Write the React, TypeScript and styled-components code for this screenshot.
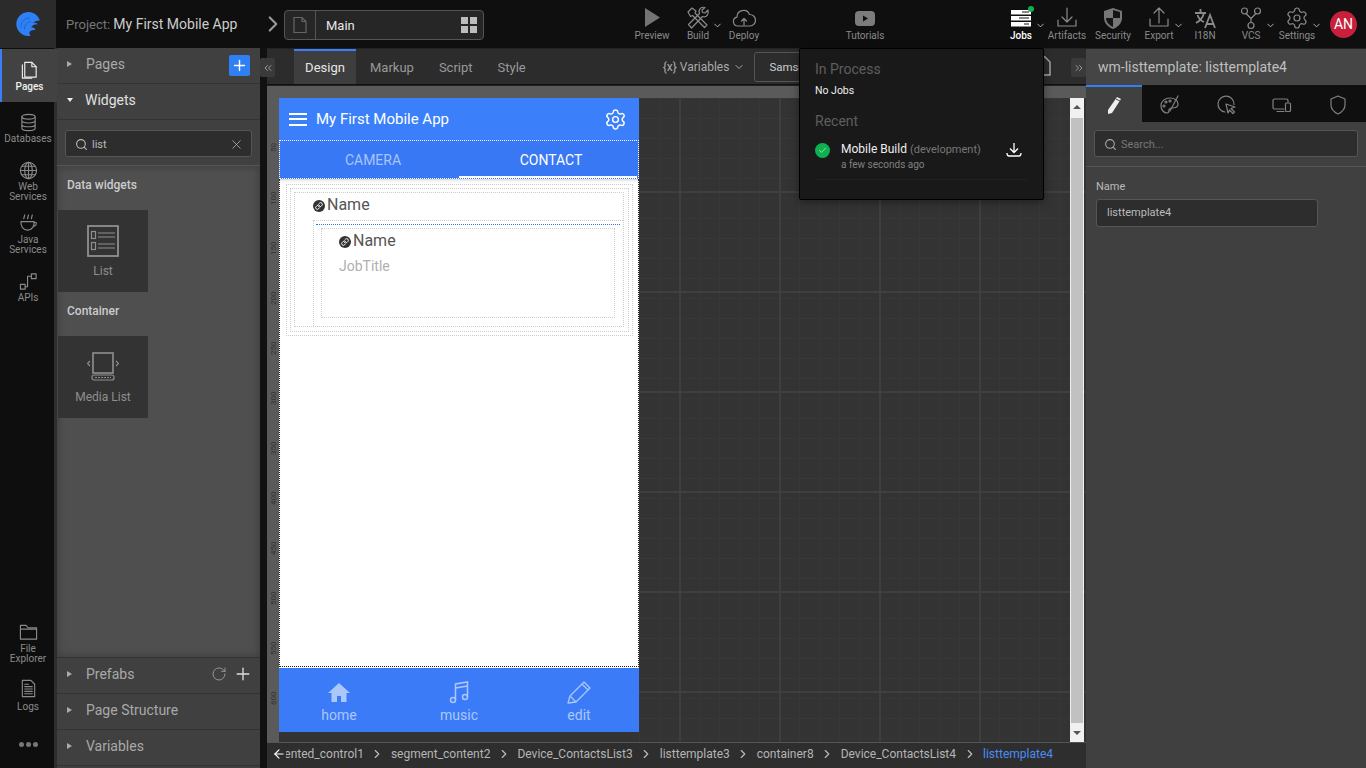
import React from "react";
import styled, { createGlobalStyle } from "styled-components";
import { Settings, Search, X, RotateCw, Plus, ChevronRight, ChevronDown, ChevronsLeft, ChevronsRight, Check, Link as LinkGlyph, ArrowLeft } from "lucide-react";

const Global = createGlobalStyle`
  html, body { margin: 0; padding: 0; height: 100%; background: #0f0f0f; overflow: hidden; }
  * { box-sizing: border-box; }
  body { font-family: Roboto, "Liberation Sans", sans-serif; }
`;

const Page = styled.div`
  position: relative;
  width: 1366px;
  height: 768px;
  display: flex;
  flex-direction: column;
  overflow: hidden;
  color: #bbb;
`;

/* top bar */
const TopBar = styled.header`
  height: 48px;
  flex: none;
  display: flex;
  align-items: stretch;
  background: #0f0f0f;
`;
const LogoCell = styled.div`
  width: 56px;
  background: #2b2b2b;
  display: flex;
  align-items: center;
  justify-content: center;
`;
const ProjectLabel = styled.div`
  margin-left: 10px;
  width: 198px;
  font-size: 13px;
  line-height: 48px;
  color: #777;
  white-space: nowrap;
  span { color: #ccc; font-size: 14px; }
`;
const CrumbArrow = styled(ChevronRight)`
  width: 26px;
  height: 26px;
  margin: 11px -2px 0 -4px;
  color: #999;
  flex: none;
`;
const PageCrumb = styled.div`
  margin-top: 10px;
  height: 30px;
  width: 200px;
  display: flex;
  align-items: center;
  border: 1px solid #555;
  border-radius: 4px;
  background: #262626;
`;
const PageIconCell = styled.div`
  width: 31px;
  height: 100%;
  display: flex;
  align-items: center;
  justify-content: center;
  border-right: 1px solid #555;
`;
const PageName = styled.div`
  flex: 1;
  padding-left: 10px;
  font-size: 13px;
  color: #e8e8e8;
`;
const Quad = styled.div`
  display: grid;
  grid-template-columns: 7px 7px;
  grid-template-rows: 7px 7px;
  gap: 2px;
  margin-right: 6px;
  i { background: #bdbdbd; }
`;
const ToolGroup = styled.div<{ $left: number }>`
  display: flex;
  margin-left: ${(p) => p.$left}px;
`;
const ToolItem = styled.div<{ $active?: boolean }>`
  position: relative;
  width: 46px;
  display: flex;
  flex-direction: column;
  align-items: center;
  padding-top: 6px;
  font-size: 10px;
  line-height: 12px;
  color: ${(p) => (p.$active ? "#fff" : "#8a8a8a")};
  font-weight: ${(p) => (p.$active ? 500 : 400)};
  svg.main { width: 24px; height: 24px; }
`;
const Caret = styled(ChevronDown)`
  position: absolute;
  right: -2px;
  top: 20px;
  width: 11px;
  height: 11px;
  color: #bbb;
  stroke-width: 2;
`;
const GreenDot = styled.span`
  position: absolute;
  top: 6px;
  left: 30px;
  width: 6px;
  height: 6px;
  border-radius: 50%;
  background: #10b050;
`;
const Avatar = styled.div`
  margin: 11px 0 0 10px;
  width: 27px;
  height: 27px;
  border-radius: 50%;
  background: #c8203c;
  color: #fff;
  font-size: 14px;
  line-height: 27px;
  text-align: center;
`;

/* body */
const Body = styled.div`
  flex: 1;
  display: flex;
  min-height: 0;
`;
const Rail = styled.nav`
  width: 57px;
  flex: none;
  display: flex;
  flex-direction: column;
  background: #0e0e0e;
  border-right: 3px solid #2e2e2e;
  padding-top: 1px;
`;
const RailItem = styled.div<{ $active?: boolean; $h: number; $gap?: number }>`
  width: ${(p) => (p.$active ? 57 : 56)}px;
  height: ${(p) => p.$h}px;
  flex: none;
  display: flex;
  flex-direction: column;
  align-items: center;
  padding-top: ${(p) => (p.$active ? 12 : 11)}px;
  font-size: 10px;
  line-height: 10px;
  text-align: center;
  color: ${(p) => (p.$active ? "#f0f0f0" : "#8a8a8a")};
  font-weight: ${(p) => (p.$active ? 500 : 400)};
  background: ${(p) => (p.$active ? "#424242" : "transparent")};
  border-left: ${(p) => (p.$active ? "2px solid #3b7ff8" : "none")};
  svg { width: 19px; height: 19px; margin-bottom: ${(p) => p.$gap ?? 2}px; flex: none; }
  z-index: 1;
`;
const RailSpacer = styled.div`
  flex: 1;
`;
const Dots = styled.div`
  display: flex;
  gap: 2px;
  justify-content: center;
  padding: 0 0 21px;
  width: 56px;
  i { width: 5px; height: 5px; border-radius: 50%; background: #777; }
`;

const Panel = styled.aside`
  width: 203px;
  flex: none;
  display: flex;
  flex-direction: column;
  background: #404040;
  padding-bottom: 2px;
`;
const Accordion = styled.div<{ $open?: boolean }>`
  height: 36px;
  flex: none;
  display: flex;
  align-items: center;
  padding: 0 7px 4px 10px;
  font-size: 14px;
  color: ${(p) => (p.$open ? "#e2e2e2" : "#a9a9a9")};
  border-bottom: 1px solid #333;
`;
const Arrow = styled.span<{ $open?: boolean }>`
  width: 0;
  height: 0;
  margin-right: ${(p) => (p.$open ? 12 : 14)}px;
  border-style: solid;
  ${(p) =>
    p.$open
      ? "border-width: 4px 3.5px 0 3.5px; border-color: #eee transparent transparent transparent;"
      : "border-width: 3.5px 0 3.5px 5px; border-color: transparent transparent transparent #aaa;"}
`;
const AccordionTitle = styled.span`
  flex: 1;
`;
const AddBtn = styled.div`
  width: 21px;
  height: 21px;
  background: #2f7ff5;
  border-radius: 2px;
  display: flex;
  align-items: center;
  justify-content: center;
  color: #fff;
  margin: 4px 3px 0 0;
`;
const SearchRow = styled.div`
  height: 46px;
  flex: none;
  padding: 10px 8px;
  border-bottom: 1px solid #555;
`;
const SearchBox = styled.div`
  height: 27px;
  display: flex;
  align-items: center;
  gap: 4px;
  padding: 1px 7px 0 9px;
  background: #2d2d2d;
  border: 1px solid #555;
  border-radius: 3px;
  font-size: 11px;
  color: #bbb;
  span { flex: 1; }
`;
const WidgetArea = styled.div`
  flex: 1;
  background: #4f4f4f;
  box-shadow: inset 0 0 8px #3a3a3a;
  padding: 12px 1px 0;
`;
const GroupLabel = styled.div`
  font-size: 12px;
  font-weight: 500;
  line-height: 15px;
  color: #ccc;
  padding-left: 9px;
  margin-bottom: 17px;
`;
const WidgetCard = styled.div`
  width: 90px;
  height: 82px;
  background: #333;
  display: flex;
  flex-direction: column;
  align-items: center;
  padding-top: 15px;
  gap: 7px;
  font-size: 12px;
  line-height: 14px;
  color: #8e8e8e;
  margin-bottom: 12px;
`;
const BottomAccordions = styled.div`
  border-top: 1px solid #333;
`;
const IconBtnRow = styled.div`
  display: flex;
  gap: 6px;
  align-items: center;
`;

/* center */
const Center = styled.main`
  position: relative;
  width: 826px;
  flex: none;
  display: flex;
  flex-direction: column;
  background: #111;
`;
const CollapseBtn = styled.div<{ $side: "l" | "r" }>`
  position: absolute;
  top: 10px;
  ${(p) => (p.$side === "l" ? "left: 0;" : "right: 0;")}
  width: 15px;
  height: 19px;
  background: #3a3a3a;
  border-radius: 2px;
  display: flex;
  align-items: center;
  justify-content: center;
  color: #999;
`;
const TabBar = styled.div`
  height: 37px;
  flex: none;
  display: flex;
  align-items: stretch;
  background: #2c2c2c;
  margin-left: 7px;
  border-top: 1px solid #222;
  border-bottom: 1px solid #111;
  padding-left: 27px;
`;
const Tab = styled.div<{ $active?: boolean }>`
  padding: 0 11px;
  min-width: ${(p) => (p.$active ? 62 : 0)}px;
  font-size: 13px;
  line-height: 33px;
  text-align: center;
  color: ${(p) => (p.$active ? "#e6e6e6" : "#999")};
  background: ${(p) => (p.$active ? "#3e3e3e" : "transparent")};
  border-top: 2px solid ${(p) => (p.$active ? "#3b7ff8" : "transparent")};
  margin-right: 3px;
`;
const VarsButton = styled.div`
  margin-left: 123px;
  display: flex;
  align-items: center;
  gap: 4px;
  font-size: 12px;
  color: #aaa;
`;
const DeviceSelect = styled.div`
  margin: 3px 0 0 9px;
  height: 30px;
  width: 120px;
  border: 1px solid #555;
  border-radius: 3px;
  padding-left: 14px;
  font-size: 11.5px;
  line-height: 28px;
  color: #ccc;
`;
const SaveSlot = styled.span`
  margin: 7px 0 0 160px;
`;
const CanvasWrap = styled.div`
  flex: 1;
  margin-left: 7px;
  display: flex;
  flex-direction: column;
  min-height: 0;
  border-top: 1px solid #222;
`;
const TopRuler = styled.div`
  height: 12px;
  flex: none;
  background: #5a5a5a;
`;
const CanvasRow = styled.div`
  flex: 1;
  display: flex;
  min-height: 0;
  background: #333;
`;
const LeftRuler = styled.div`
  width: 12px;
  flex: none;
  background: #5a5a5a;
  padding-top: 25px;
  display: flex;
  flex-direction: column;
  align-items: center;
  overflow: hidden;
`;
const RulerMark = styled.div`
  height: 50px;
  flex: none;
  display: flex;
  align-items: center;
  justify-content: center;
  writing-mode: vertical-rl;
  transform: rotate(180deg);
  font-size: 8px;
  color: #333;
`;
const Phone = styled.div`
  width: 360px;
  flex: none;
  height: 634px;
  display: flex;
  flex-direction: column;
  background: #fff;
`;
const PhoneHeader = styled.div`
  height: 42px;
  flex: none;
  background: #3b80fa;
  display: flex;
  align-items: center;
  padding: 0 12px 0 10px;
  color: #fff;
  font-size: 15px;
  span { flex: 1; margin-left: 9px; }
`;
const Burger = styled.div`
  width: 18px;
  display: flex;
  flex-direction: column;
  gap: 3.5px;
  i { height: 2px; background: #fff; display: block; }
`;
const SegTabs = styled.div`
  height: 39px;
  flex: none;
  background: #3978f5;
  border: 1px dotted #fff;
  display: grid;
  grid-template-columns: 1fr 1fr;
  padding: 0 1px;
`;
const SegTab = styled.div<{ $active?: boolean }>`
  font-size: 14px;
  text-align: center;
  padding-left: 6px;
  line-height: 38px;
  height: 37px;
  color: ${(p) => (p.$active ? "#fff" : "#a9c5fa")};
  border-bottom: 2px solid ${(p) => (p.$active ? "#fff" : "transparent")};
`;
const PhoneContent = styled.div`
  flex: 1;
  border: 1px dotted #222;
  border-top: none;
  box-shadow: inset 0 3px 3px -2px #ccc;
  padding: 5px 5px 0 6px;
`;
const Dotted = styled.div<{ $pad: string }>`
  border: 1px dotted #ccc;
  padding: ${(p) => p.$pad};
`;
const InnerFrame = styled(Dotted)`
  margin-top: 6px;
  border-right: none;
  border-bottom: none;
`;
const TemplateFrame = styled(Dotted)`
  height: 90px;
`;
const NameRow = styled.div<{ $top: number }>`
  display: flex;
  align-items: center;
  gap: 2px;
  padding-top: ${(p) => p.$top}px;
  font-size: 16px;
  line-height: 19px;
  color: #555;
`;
const BindIcon = styled.span`
  width: 12px;
  height: 12px;
  margin-top: 3px;
  border-radius: 50%;
  background: #333;
  display: flex;
  align-items: center;
  justify-content: center;
  color: #fff;
`;
const JobTitle = styled.div`
  font-size: 14px;
  line-height: 17px;
  margin-top: 8px;
  color: #b0b0b0;
`;
const SelectedEdge = styled.div`
  border-top: 1px dotted #2f74f0;
  height: 1px;
  margin: 0 -5px 3px;
`;
const PhoneNav = styled.div`
  height: 64px;
  flex: none;
  background: #3b7bf8;
  display: grid;
  grid-template-columns: repeat(3, 1fr);
  margin-top: 1px;
`;
const NavItem = styled.div`
  display: flex;
  flex-direction: column;
  align-items: center;
  padding-top: 12px;
  font-size: 14px;
  line-height: 17px;
  color: #abc7fb;
  svg { width: 24px; height: 24px; margin-bottom: 3px; }
`;
const GridArea = styled.div`
  flex: 1;
  background-color: #333;
  background-image:
    repeating-linear-gradient(90deg, transparent 0 40px, #3f3f3f 40px 42px, transparent 42px 100px),
    repeating-linear-gradient(180deg, transparent 0 93px, #3f3f3f 93px 95px, transparent 95px 100px),
    repeating-linear-gradient(90deg, #373737 0 1px, transparent 1px 20px),
    repeating-linear-gradient(180deg, #373737 0 1px, transparent 1px 20px);
  display: flex;
  justify-content: flex-end;
  padding-right: 2px;
`;
const Scrollbar = styled.div`
  width: 14px;
  background: #f1f1f1;
  display: flex;
  flex-direction: column;
  align-items: center;
  padding: 0 1px;
`;
const ScrollArrow = styled.span<{ $down?: boolean }>`
  flex: none;
  width: 0;
  height: 0;
  margin: ${(p) => (p.$down ? "8px 0 7px" : "7px 0 9px")};
  border-left: 4px solid transparent;
  border-right: 4px solid transparent;
  ${(p) => (p.$down ? "border-top: 4px solid #555;" : "border-bottom: 4px solid #555;")}
`;
const ScrollThumb = styled.div`
  flex: 1;
  width: 100%;
  background: #c1c1c1;
`;
const BreadcrumbBar = styled.div`
  height: 26px;
  flex: none;
  margin-left: 7px;
  background: #2e2e2e;
  border-top: 1px solid #555;
  display: flex;
  align-items: center;
  padding: 0 0 3px 5px;
  color: #ddd;
  font-size: 12px;
`;
const CrumbClip = styled.div`
  flex: 1;
  min-width: 0;
  overflow: hidden;
  display: flex;
  justify-content: flex-end;
  align-items: center;
  padding-right: 33px;
  white-space: nowrap;
`;
const Crumb = styled.span<{ $active?: boolean }>`
  flex: none;
  color: ${(p) => (p.$active ? "#4a8cf7" : "#b5b5b5")};
`;
const CrumbSep = styled(ChevronRight)`
  flex: none;
  width: 14px;
  height: 14px;
  margin: 0 6.5px;
  color: #bbb;
`;

/* inspector */
const Inspector = styled.aside`
  width: 280px;
  flex: none;
  display: flex;
  flex-direction: column;
  background: #404040;
  border-top: 1px solid #222;
`;
const InspectorTitle = styled.div`
  height: 36px;
  flex: none;
  padding-left: 12px;
  font-size: 14px;
  line-height: 36px;
  color: #bfbfbf;
  background: #454545;
`;
const InspectorTabs = styled.div`
  height: 37px;
  flex: none;
  display: flex;
  background: #0f0f0f;
`;
const InspectorTab = styled.div<{ $active?: boolean }>`
  width: 56px;
  display: flex;
  align-items: center;
  justify-content: center;
  color: ${(p) => (p.$active ? "#eee" : "#808080")};
  background: ${(p) => (p.$active ? "#404040" : "transparent")};
  border-top: 2px solid ${(p) => (p.$active ? "#2f7ff5" : "transparent")};
`;
const InspectorSearch = styled.div`
  height: 45px;
  flex: none;
  padding: 8px;
  border-bottom: 1px solid #555;
`;
const InspectorSearchBox = styled(SearchBox)`
  color: #777;
`;
const FieldLabel = styled.div`
  margin: 13px 0 0 10px;
  font-size: 11px;
  line-height: 13px;
  color: #bbb;
`;
const FieldInput = styled.div`
  margin: 6px 0 0 10px;
  width: 222px;
  height: 28px;
  padding-left: 10px;
  background: #2d2d2d;
  border: 1px solid #555;
  border-radius: 3px;
  font-size: 11px;
  line-height: 26px;
  color: #bbb;
`;

/* jobs popup */
const JobsPopup = styled.div`
  position: absolute;
  left: 799px;
  top: 48px;
  width: 245px;
  height: 152px;
  background: #191919;
  border: 1px solid #000;
  border-radius: 2px;
  padding: 12px 15px;
  box-shadow: 0 2px 8px rgba(0, 0, 0, 0.4);
`;
const PopupHeading = styled.div`
  font-size: 14px;
  line-height: 17px;
  color: #5e5e5e;
`;
const NoJobs = styled.div`
  margin: 6px 0 15px;
  font-size: 10.5px;
  line-height: 14px;
  color: #eee;
`;
const JobRow = styled.div`
  margin-top: 12px;
  display: flex;
  border-bottom: 1px solid #202020;
  height: 38px;
`;
const JobOk = styled.div`
  width: 15px;
  height: 15px;
  margin: 1px 11px 0 0;
  border-radius: 50%;
  background: #0fb04f;
  display: flex;
  align-items: center;
  justify-content: center;
  color: #bdeecd;
  flex: none;
`;
const JobText = styled.div`
  flex: 1;
  font-size: 12px;
  line-height: 15px;
  color: #eee;
  em { font-style: normal; color: #777; font-size: 11px; }
`;
const JobTime = styled.div`
  font-size: 10px;
  line-height: 16px;
  color: #808080;
`;
const JobDownload = styled.div`
  margin-right: 6px;
  color: #fff;
`;

const line = { fill: "none", stroke: "currentColor", strokeWidth: 1.2, strokeLinecap: "round", strokeLinejoin: "round" } as const;

const Logo = () => (
  <svg width="24" height="24" viewBox="0 0 24 24">
    <path d="M23.800 8.500A12 12 0 1 0 14.500 23.800C13 22 13 20 14.500 19c1.500-1 3.500-1.300 5-.8-.5-2-2.500-3-4.500-2.800 1-2 4-3.500 7-3-1-1.500-3-2-5-1.500 1.500-1.500 4-2.500 6.800-2.400Z" fill="#2f7ff5" />
    <path d="M5 16c-1-5 3-10 9-10M8.500 17.500C8 13 11 10 15 9.500" fill="none" stroke="#2468cc" strokeWidth="1" />
  </svg>
);
const FileOutline = () => (
  <svg width="18" height="18" viewBox="0 0 18 18" fill="none" stroke="#666" strokeWidth="1.200">
    <path d="M3 1.500h8l4 4v11H3Z" />
    <path d="M11 1.500v4h4" />
  </svg>
);
const PagesIcon = () => (
  <svg viewBox="0 0 20 20" {...line}>
    <path d="M2.500 4v14h10" />
    <path d="M5 1.500h7.500l4.500 4.500v11H5Z" fill="#424242" />
    <path d="M12.500 1.500V6H17" />
  </svg>
);
const PreviewIcon = () => (
  <svg className="main" viewBox="0 0 24 24"><path d="M5 2l15 9.500L5 21Z" fill="#747474" /></svg>
);
const BuildIcon = () => (
  <svg className="main" viewBox="0 0 24 24" {...line}>
    <path d="M2 6l4-4 4 3-1 2 12 12-2.500 2.500L6.500 9.500l-2 1Z" />
    <path d="M22 4l-3 3-2.500-.5L16 4l3-2.500c-3.500-1-7 1.500-5.500 6L2.500 18.500 5.500 22 16.500 10.500c4 1.500 6.500-2.500 5.500-6.500Z" />
  </svg>
);
const DeployIcon = () => (
  <svg className="main" viewBox="0 0 24 24" {...line}>
    <path d="M8 20H6a4.500 4.500 0 0 1-1-8.900A6.500 6.500 0 0 1 17.500 8.500 5.500 5.500 0 0 1 18 20H8Z" />
    <path d="M12 19v-6M9.500 15l2.500-2.500 2.500 2.500" />
  </svg>
);
const TutorialsIcon = () => (
  <svg className="main" viewBox="0 0 24 24">
    <rect x="2" y="5" width="20" height="15" rx="4" fill="#7c7c7c" />
    <path d="M10 9.500l5 3-5 3Z" fill="#0f0f0f" />
  </svg>
);
const JobsIcon = () => (
  <svg className="main" viewBox="0 0 24 24">
    <rect x="2" y="4" width="20" height="4.500" fill="#fff" />
    <rect x="2" y="10" width="20" height="4.500" fill="#fff" />
    <rect x="2" y="16" width="20" height="4.500" fill="#fff" />
    <path d="M13 6h7M10 12h10M15 18h5" stroke="#111" strokeWidth="1" />
  </svg>
);
const ArtifactsIcon = () => (
  <svg className="main" viewBox="0 0 24 24" {...line}>
    <path d="M12 2v14M7 11l5 5 5-5M3 14v6h18v-6" />
  </svg>
);
const SecurityIcon = () => (
  <svg className="main" viewBox="0 0 24 24">
    <path d="M12 2l9 3v7c0 5-4 9-9 11-5-2-9-6-9-11V5Z" fill="#777" />
    <path d="M12 4v8h7V6ZM12 12H5c0 4 3 7 7 9Z" fill="#151515" />
  </svg>
);
const ExportIcon = () => (
  <svg className="main" viewBox="0 0 24 24" {...line}>
    <path d="M12 17V2M7 7l5-5 5 5M3 13v7h18v-7" />
  </svg>
);
const I18nIcon = () => (
  <svg className="main" viewBox="0 0 24 24" fill="none" stroke="#8a8a8a" strokeWidth="1.800">
    <path d="M2 7h11M7.500 3v4M11 7c-1 4-4 8-8 10M4.500 9c1 3 4 6 6.500 7M12 22l5-13 5 13M14 18h6" />
  </svg>
);
const VcsIcon = () => (
  <svg className="main" viewBox="0 0 24 24" {...line}>
    <circle cx="5.500" cy="5" r="3" />
    <circle cx="18.500" cy="5" r="3" />
    <circle cx="12" cy="19.500" r="3" />
    <path d="M7 7.500l5 5 5-5M12 12.500v4" />
  </svg>
);
const DatabaseIcon = () => (
  <svg viewBox="0 0 20 20" {...line}>
    <ellipse cx="10" cy="4" rx="7" ry="2.500" />
    <path d="M3 4v12c0 1.400 3 2.500 7 2.500s7-1.100 7-2.500V4M3 8c0 1.400 3 2.500 7 2.500s7-1.100 7-2.500M3 12c0 1.400 3 2.500 7 2.500s7-1.100 7-2.500" />
  </svg>
);
const GlobeIcon = () => (
  <svg viewBox="0 0 20 20" {...line}>
    <circle cx="10" cy="10" r="8.500" />
    <ellipse cx="10" cy="10" rx="4" ry="8.500" />
    <path d="M10 1.500v17M1.500 10h17M3 5.500h14M3 14.500h14" />
  </svg>
);
const CoffeeIcon = () => (
  <svg viewBox="0 0 20 20" {...line}>
    <path d="M6 1l-1 4M10 1L9 5M14 1l-1 4" />
    <path d="M2 8h14c0 5-2 9-7 9s-7-4-7-9ZM16 9h2c1 2-1 4-3 4" />
  </svg>
);
const ApiIcon = () => (
  <svg viewBox="0 0 20 20" {...line}>
    <rect x="1.500" y="13" width="5" height="5" />
    <rect x="13" y="2" width="5" height="5" />
    <path d="M6.500 15.500H9V4.500h4" />
  </svg>
);
const FolderIcon = () => (
  <svg viewBox="0 0 20 20" {...line}>
    <path d="M1.500 17V2.500h6l2 2.500h9v12ZM1.500 6.500h17" />
  </svg>
);
const LogsIcon = () => (
  <svg viewBox="0 0 20 20" {...line}>
    <path d="M3.500 1.500h9l4 4v13h-13ZM6 8h8M6 10.500h8M6 13h8M6 15.500h8M6 5.500h4" />
  </svg>
);
const ListWidgetIcon = () => (
  <svg width="32" height="32" viewBox="0 0 32 32" fill="none" stroke="#8f8f8f" strokeWidth="1.200">
    <rect x="1" y="1" width="30" height="30" strokeWidth="1.800" />
    <rect x="4.500" y="6.500" width="4" height="7" />
    <rect x="4.500" y="17.500" width="4" height="7" />
    <path d="M11 8h17M11 12h17M11 19h17M11 23h17" />
  </svg>
);
const MediaListIcon = () => (
  <svg width="32" height="32" viewBox="0 0 32 32" fill="none" stroke="#8f8f8f" strokeWidth="1.200">
    <rect x="6" y="2" width="20" height="20" strokeWidth="1.600" />
    <path d="M3 10l-2.500 2.500L3 15M29 10l2.500 2.500L29 15" />
    <rect x="5" y="24" width="22" height="5" rx="2" />
    <path d="M8 26.500h16" strokeDasharray="2 1" />
  </svg>
);
const HomeNavIcon = () => (
  <svg viewBox="0 0 24 24" fill="currentColor">
    <path d="M12 3L1 13h3.500v9H10v-6h4v6h5.500v-9H23Z" />
  </svg>
);
const EditNavIcon = () => (
  <svg viewBox="0 0 24 24" fill="none" stroke="currentColor" strokeWidth="1.300" strokeLinejoin="round">
    <path d="M1 23l2-7L17 2l6 6L9 22ZM3 16l6 6M15 4l6 6" />
  </svg>
);
const MusicNavIcon = () => (
  <svg viewBox="0 0 24 24" fill="none" stroke="currentColor" strokeWidth="1.500">
    <circle cx="6" cy="20" r="2.500" />
    <circle cx="18" cy="17" r="2.500" />
    <path d="M8.500 20V4L20.500 2v15M8.500 8l12-2" />
  </svg>
);
const PencilTab = () => (
  <svg width="18" height="18" viewBox="0 0 18 18">
    <path d="M12 1l4 2-9 14-4 1 0-4Z" fill="#eee" />
    <path d="M11 3l4 2" stroke="#404040" strokeWidth="1" />
  </svg>
);
const PaletteTab = () => (
  <svg width="20" height="20" viewBox="0 0 20 20" {...line}>
    <path d="M10 3C5 3 1 6 1 11c0 4 3 7 6 7 2 0 2-2 2-3s1-2 3-2c3 0 6-1 6-4 0-4-4-6-8-6Z" />
    <path d="M18 1L10 16" />
    <circle cx="6" cy="7" r="1" />
    <circle cx="4" cy="11" r="1" />
    <circle cx="10" cy="6" r="1" />
  </svg>
);
const EventsTab = () => (
  <svg width="20" height="20" viewBox="0 0 20 20" {...line}>
    <path d="M18 9.500A8 8 0 1 0 9 17" />
    <path d="M10 9l9 3-4 1.500 3.500 3.500-1.500 1.500-3.500-3.500L12 18Z" />
  </svg>
);
const DeviceTab = () => (
  <svg width="20" height="20" viewBox="0 0 20 20" {...line}>
    <path d="M12 14H2.500a1.500 1.500 0 0 1-1.500-1.500v-7A1.500 1.500 0 0 1 2.500 4h12A1.500 1.500 0 0 1 16 5.500V7M5 16.500h7" />
    <rect x="13.500" y="8" width="5" height="8.500" rx="1" />
  </svg>
);
const ShieldTab = () => (
  <svg width="18" height="20" viewBox="0 0 18 20" {...line}>
    <path d="M9 1l7 3v6c0 4-3 7-7 9-4-2-7-5-7-9V4Z" />
  </svg>
);
const DownloadIcon = () => (
  <svg width="16" height="16" viewBox="0 0 16 16" fill="none" stroke="currentColor" strokeWidth="1.300">
    <path d="M8 1v9M4 6.500L8 10.500l4-4M1 11c0 2 .5 3 2 3h10c1.500 0 2-1 2-3" />
  </svg>
);
const FileSave = () => (
  <svg width="18" height="20" viewBox="0 0 18 20" fill="none" stroke="#aaa" strokeWidth="1.400">
    <path d="M2 1h9l5 5v13H2Z" />
    <circle cx="7" cy="13" r="2" />
  </svg>
);

const marks = [50, 100, 150, 200, 250, 300, 350, 400, 450, 500, 550, 600];
const crumbs = ["segmented_control1", "segment_content2", "Device_ContactsList3", "listtemplate3", "container8", "Device_ContactsList4"];

export default function App() {
  return (
    <Page>
      <Global />
      <TopBar>
        <LogoCell><Logo /></LogoCell>
        <ProjectLabel>Project: <span>My First Mobile App</span></ProjectLabel>
        <CrumbArrow />
        <PageCrumb>
          <PageIconCell><FileOutline /></PageIconCell>
          <PageName>Main</PageName>
          <Quad><i /><i /><i /><i /></Quad>
        </PageCrumb>
        <ToolGroup $left={145}>
          <ToolItem><PreviewIcon />Preview</ToolItem>
          <ToolItem><BuildIcon />Build<Caret /></ToolItem>
          <ToolItem><DeployIcon />Deploy</ToolItem>
        </ToolGroup>
        <ToolGroup $left={75}>
          <ToolItem><TutorialsIcon />Tutorials</ToolItem>
        </ToolGroup>
        <ToolGroup $left={110}>
          <ToolItem $active><JobsIcon /><GreenDot />Jobs<Caret /></ToolItem>
          <ToolItem><ArtifactsIcon />Artifacts</ToolItem>
          <ToolItem><SecurityIcon />Security</ToolItem>
          <ToolItem><ExportIcon />Export<Caret /></ToolItem>
          <ToolItem><I18nIcon />I18N</ToolItem>
          <ToolItem><VcsIcon />VCS<Caret /></ToolItem>
          <ToolItem><Settings className="main" strokeWidth={1.2} />Settings<Caret /></ToolItem>
        </ToolGroup>
        <Avatar>AN</Avatar>
      </TopBar>

      <Body>
        <Rail>
          <RailItem $active $h={53}><PagesIcon />Pages</RailItem>
          <RailItem $h={48}><DatabaseIcon />Databases</RailItem>
          <RailItem $h={53}><GlobeIcon />Web<br />Services</RailItem>
          <RailItem $h={58}><CoffeeIcon />Java<br />Services</RailItem>
          <RailItem $h={48}><ApiIcon />APIs</RailItem>
          <RailSpacer />
          <RailItem $h={56}><FolderIcon />File<br />Explorer</RailItem>
          <RailItem $h={74} $gap={4}><LogsIcon />Logs</RailItem>
          <Dots><i /><i /><i /></Dots>
        </Rail>

        <Panel>
          <Accordion>
            <Arrow />
            <AccordionTitle>Pages</AccordionTitle>
            <AddBtn><Plus size={17} strokeWidth={2} /></AddBtn>
          </Accordion>
          <Accordion $open>
            <Arrow $open />
            <AccordionTitle>Widgets</AccordionTitle>
          </Accordion>
          <SearchRow>
            <SearchBox>
              <Search size={13} />
              <span>list</span>
              <X size={15} strokeWidth={1.2} />
            </SearchBox>
          </SearchRow>
          <WidgetArea>
            <GroupLabel>Data widgets</GroupLabel>
            <WidgetCard><ListWidgetIcon />List</WidgetCard>
            <GroupLabel>Container</GroupLabel>
            <WidgetCard><MediaListIcon />Media List</WidgetCard>
          </WidgetArea>
          <BottomAccordions>
            <Accordion>
              <Arrow />
              <AccordionTitle>Prefabs</AccordionTitle>
              <IconBtnRow>
                <RotateCw size={16} strokeWidth={1.2} />
                <Plus size={20} color="#ddd" strokeWidth={1.6} />
              </IconBtnRow>
            </Accordion>
            <Accordion><Arrow /><AccordionTitle>Page Structure</AccordionTitle></Accordion>
            <Accordion><Arrow /><AccordionTitle>Variables</AccordionTitle></Accordion>
          </BottomAccordions>
        </Panel>

        <Center>
          <CollapseBtn $side="l"><ChevronsLeft size={12} /></CollapseBtn>
          <CollapseBtn $side="r"><ChevronsRight size={12} /></CollapseBtn>
          <TabBar>
            <Tab $active>Design</Tab>
            <Tab>Markup</Tab>
            <Tab>Script</Tab>
            <Tab>Style</Tab>
            <VarsButton>{"{x}"} Variables <ChevronDown size={12} /></VarsButton>
            <DeviceSelect>Samsung</DeviceSelect>
            <SaveSlot><FileSave /></SaveSlot>
          </TabBar>
          <CanvasWrap>
            <TopRuler />
            <CanvasRow>
              <LeftRuler>
                {marks.map((m) => <RulerMark key={m}>{m}</RulerMark>)}
              </LeftRuler>
              <Phone>
                <PhoneHeader>
                  <Burger><i /><i /><i /></Burger>
                  <span>My First Mobile App</span>
                  <Settings size={23} strokeWidth={1.5} />
                </PhoneHeader>
                <SegTabs>
                  <SegTab>CAMERA</SegTab>
                  <SegTab $active>CONTACT</SegTab>
                </SegTabs>
                <PhoneContent>
                  <Dotted $pad="3px">
                    <Dotted $pad="3px 4px 4px 3px">
                      <Dotted $pad="0 0 0 18px">
                        <NameRow $top={2}><BindIcon><LinkGlyph size={8} strokeWidth={3} /></BindIcon>Name</NameRow>
                        <InnerFrame $pad="3px 8px 8px 7px">
                          <SelectedEdge />
                          <TemplateFrame $pad="2px 0 0 17px">
                            <NameRow $top={0}><BindIcon><LinkGlyph size={8} strokeWidth={3} /></BindIcon>Name</NameRow>
                            <JobTitle>JobTitle</JobTitle>
                          </TemplateFrame>
                        </InnerFrame>
                      </Dotted>
                    </Dotted>
                  </Dotted>
                </PhoneContent>
                <PhoneNav>
                  <NavItem><HomeNavIcon />home</NavItem>
                  <NavItem><MusicNavIcon />music</NavItem>
                  <NavItem><EditNavIcon />edit</NavItem>
                </PhoneNav>
              </Phone>
              <GridArea>
                <Scrollbar>
                  <ScrollArrow />
                  <ScrollThumb />
                  <ScrollArrow $down />
                </Scrollbar>
              </GridArea>
            </CanvasRow>
          </CanvasWrap>
          <BreadcrumbBar>
            <ArrowLeft size={14} color="#fff" />
            <CrumbClip>
              {crumbs.map((c) => (
                <React.Fragment key={c}>
                  <Crumb>{c}</Crumb>
                  <CrumbSep />
                </React.Fragment>
              ))}
              <Crumb $active>listtemplate4</Crumb>
            </CrumbClip>
          </BreadcrumbBar>
        </Center>

        <Inspector>
          <InspectorTitle>wm-listtemplate: listtemplate4</InspectorTitle>
          <InspectorTabs>
            <InspectorTab $active><PencilTab /></InspectorTab>
            <InspectorTab><PaletteTab /></InspectorTab>
            <InspectorTab><EventsTab /></InspectorTab>
            <InspectorTab><DeviceTab /></InspectorTab>
            <InspectorTab><ShieldTab /></InspectorTab>
          </InspectorTabs>
          <InspectorSearch>
            <InspectorSearchBox>
              <Search size={13} color="#aaa" />
              <span>Search...</span>
            </InspectorSearchBox>
          </InspectorSearch>
          <FieldLabel>Name</FieldLabel>
          <FieldInput>listtemplate4</FieldInput>
        </Inspector>
      </Body>

      <JobsPopup>
        <PopupHeading>In Process</PopupHeading>
        <NoJobs>No Jobs</NoJobs>
        <PopupHeading>Recent</PopupHeading>
        <JobRow>
          <JobOk><Check size={9} /></JobOk>
          <JobText>
            Mobile Build <em>(development)</em>
            <JobTime>a few seconds ago</JobTime>
          </JobText>
          <JobDownload><DownloadIcon /></JobDownload>
        </JobRow>
      </JobsPopup>
    </Page>
  );
}
